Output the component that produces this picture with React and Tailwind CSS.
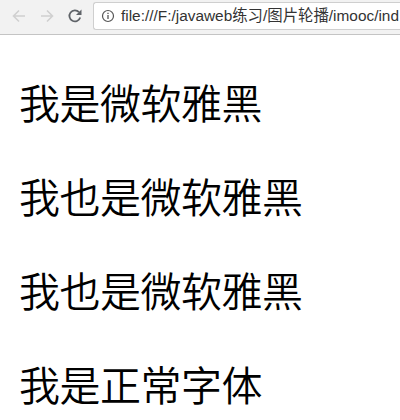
const Back = ({ color }) => (
  <svg width="16" height="16" viewBox="0 0 16 16" fill="none" stroke={color} strokeWidth="1.6">
    <path d="M14 8H2.5M8 2.5L2.5 8L8 13.5" />
  </svg>
);

const Forward = ({ color }) => (
  <svg width="16" height="16" viewBox="0 0 16 16" fill="none" stroke={color} strokeWidth="1.6">
    <path d="M2 8h11.5M8 2.5L13.5 8L8 13.5" />
  </svg>
);

const Reload = () => (
  <svg width="16" height="16" viewBox="0 0 16 16" fill="none">
    <path d="M13.2 9.5A5.5 5.5 0 1 1 12 4.2" stroke="#5f6368" strokeWidth="1.8" />
    <path d="M14.5 1.5V7H9z" fill="#5f6368" />
  </svg>
);

const Info = () => (
  <svg width="14" height="14" viewBox="0 0 14 14" fill="none" stroke="#555">
    <circle cx="7" cy="7" r="5.5" strokeWidth="1.2" />
    <path d="M7 6v4M7 3.8v1.2" strokeWidth="1.3" />
  </svg>
);

// browser toolbar above the page
const Toolbar = () => (
  <div className="flex h-[35px] items-start overflow-hidden border-b border-[#c4c4c4] bg-[#f2f2f2] pt-[2px]">
    <div className="flex h-[28px] w-[93px] shrink-0 items-center gap-[12px] pl-[11px]">
      <Back color="#d0d0d0" />
      <Forward color="#d0d0d0" />
      <Reload />
    </div>
    <div className="flex h-[28px] flex-1 items-center gap-[6px] rounded-l-[3px] border border-r-0 border-[#cfcfcf] bg-white pl-[7px]">
      <Info />
      <span className="whitespace-nowrap text-[15.4px] text-[#333] [font-family:'Liberation_Sans','Noto_Sans_CJK_SC',sans-serif]">
        file:///F:/javaweb练习/图片轮播/imooc/ind
      </span>
    </div>
  </div>
);

export default function App() {
  const lines = ["我是微软雅黑", "我也是微软雅黑", "我也是微软雅黑", "我是正常字体"];
  return (
    <div className="h-[420px] w-[400px] overflow-hidden bg-white">
      <Toolbar />
      <div className="flex flex-col gap-[34px] pl-[19px] pt-[36px] text-[41px] leading-[60px] tracking-[-0.5px] text-black font-[350] [font-family:'Noto_Sans_CJK_SC',sans-serif]">
        {lines.map((line, i) => (
          <p key={i}>{line}</p>
        ))}
      </div>
    </div>
  );
}
